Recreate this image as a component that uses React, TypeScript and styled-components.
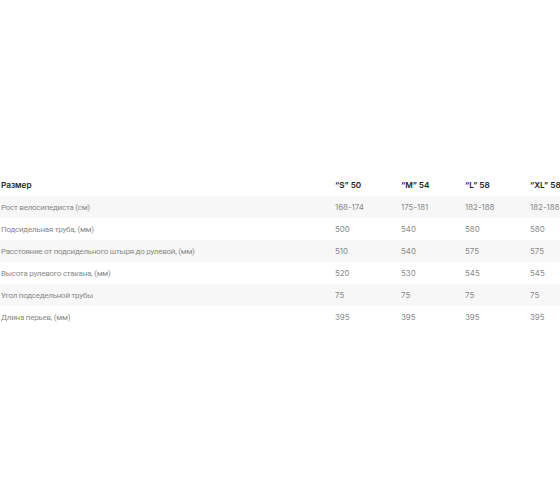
import React from "react";
import styled, { createGlobalStyle } from "styled-components";

const Global = createGlobalStyle`
  html, body { margin: 0; padding: 0; background: #fff; }
  body { width: 560px; height: 504px; overflow: hidden; }
`;

const Page = styled.div`
  padding-top: 174px;
  width: 560px;
  overflow: hidden;
`;

const Table = styled.div`
  width: 600px;
  display: flex;
  flex-direction: column;
  font-family: Inter, "Noto Sans", sans-serif;
`;

const Row = styled.div<{ $striped?: boolean }>`
  display: grid;
  grid-template-columns: 334px 66px 64px 65px 70px;
  height: 22px;
  align-items: center;
  background: ${(p) => (p.$striped ? "#f7f7f7" : "transparent")};
`;

const Cell = styled.div<{ $head?: boolean }>`
  font-size: ${(p) => (p.$head ? "8.2px" : "7.9px")};
  font-weight: ${(p) => (p.$head ? 600 : 400)};
  color: ${(p) => (p.$head ? "#1e1e1e" : "#8a8a8a")};
  white-space: nowrap;
  padding-left: 1px;
`;

const Label = styled(Cell)`
  font-family: Roboto, "Liberation Sans", sans-serif;
  font-size: 8px;
  letter-spacing: -0.25px;
`;

const header = ["Размер", "\u201CS\u201D 50", "\u201CM\u201D 54", "\u201CL\u201D 58", "\u201CXL\u201D 58"];

const rows: string[][] = [
  ["Рост велосипедиста (см)", "168-174", "175-181", "182-188", "182-188"],
  ["Подсидельная труба, (мм)", "500", "540", "580", "580"],
  ["Расстояние от подсидельного штыря до рулевой, (мм)", "510", "540", "575", "575"],
  ["Высота рулевого стакана, (мм)", "520", "530", "545", "545"],
  ["Угол подседельной трубы", "75", "75", "75", "75"],
  ["Длина перьев, (мм)", "395", "395", "395", "395"],
];

export default function App() {
  return (
    <>
      <Global />
      <Page>
        <Table>
          <Row>
            {header.map((h, i) => (
              <Cell key={i} $head>
                {h}
              </Cell>
            ))}
          </Row>
          {rows.map((r, ri) => (
            <Row key={ri} $striped={ri % 2 === 0}>
              {r.map((c, ci) =>
                ci === 0 ? <Label key={ci}>{c}</Label> : <Cell key={ci}>{c}</Cell>
              )}
            </Row>
          ))}
        </Table>
      </Page>
    </>
  );
}
